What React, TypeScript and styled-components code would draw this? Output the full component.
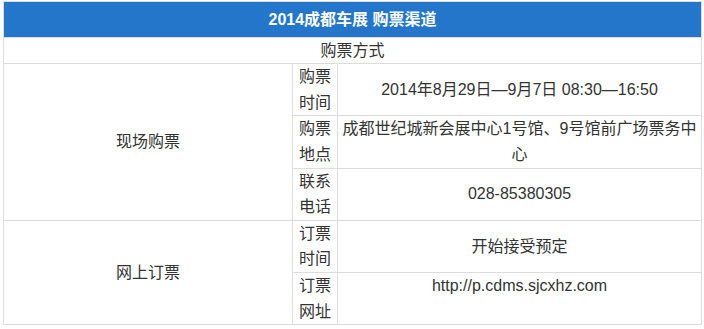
import React from "react";
import styled, { createGlobalStyle } from "styled-components";

const rows = [
  {
    group: "现场购票",
    items: [
      { label: "购票时间", value: "2014年8月29日—9月7日 08:30—16:50" },
      { label: "购票地点", value: "成都世纪城新会展中心1号馆、9号馆前广场票务中心" },
      { label: "联系电话", value: "028-85380305" },
    ],
  },
  {
    group: "网上订票",
    items: [
      { label: "订票时间", value: "开始接受预定" },
      { label: "订票网址", value: "http://p.cdms.sjcxhz.com" },
    ],
  },
];

const App = () => {
  return (
    <Page>
      <GlobalStyle />
      <Table>
        <colgroup>
          <col style={{ width: 289 }} />
          <col style={{ width: 45 }} />
          <col style={{ width: 364 }} />
        </colgroup>
        <tbody>
          <tr>
            <HeadCell colSpan={3}>2014成都车展 购票渠道</HeadCell>
          </tr>
          <tr>
            <Cell colSpan={3}>购票方式</Cell>
          </tr>
          {rows.map((group) =>
            group.items.map((item, index) => (
              <tr key={item.label}>
                {index === 0 && (
                  <Cell rowSpan={group.items.length}>{group.group}</Cell>
                )}
                <LabelCell>
                  {item.label.slice(0, 2)}
                  <br />
                  {item.label.slice(2)}
                </LabelCell>
                <ValueCell $top={item.label === "订票网址"}>{item.value}</ValueCell>
              </tr>
            ))
          )}
        </tbody>
      </Table>
    </Page>
  );
};

const GlobalStyle = createGlobalStyle`
  body {
    margin: 0;
    background: #fff;
    font-family: "Liberation Sans", "Noto Sans CJK SC", sans-serif;
    color: #333;
  }
`;

const Page = styled.div`
  padding: 1px 3px;
`;

const Table = styled.table`
  width: 698px;
  table-layout: fixed;
  border-collapse: collapse;
  font-size: 16px;
  line-height: 1.6;
`;

const Cell = styled.td`
  border: 1px solid #ddd;
  padding: 0 5px;
  text-align: center;
  vertical-align: middle;
`;

const HeadCell = styled(Cell)`
  background: #2376ca;
  color: #fff;
  font-weight: bold;
  padding: 4.5px 5px;
`;

const LabelCell = styled(Cell)`
  padding: 0;
`;

const ValueCell = styled(Cell)<{ $top?: boolean }>`
  padding: 0 2px;
  vertical-align: ${(p) => (p.$top ? "top" : "middle")};
`;

export default App;
